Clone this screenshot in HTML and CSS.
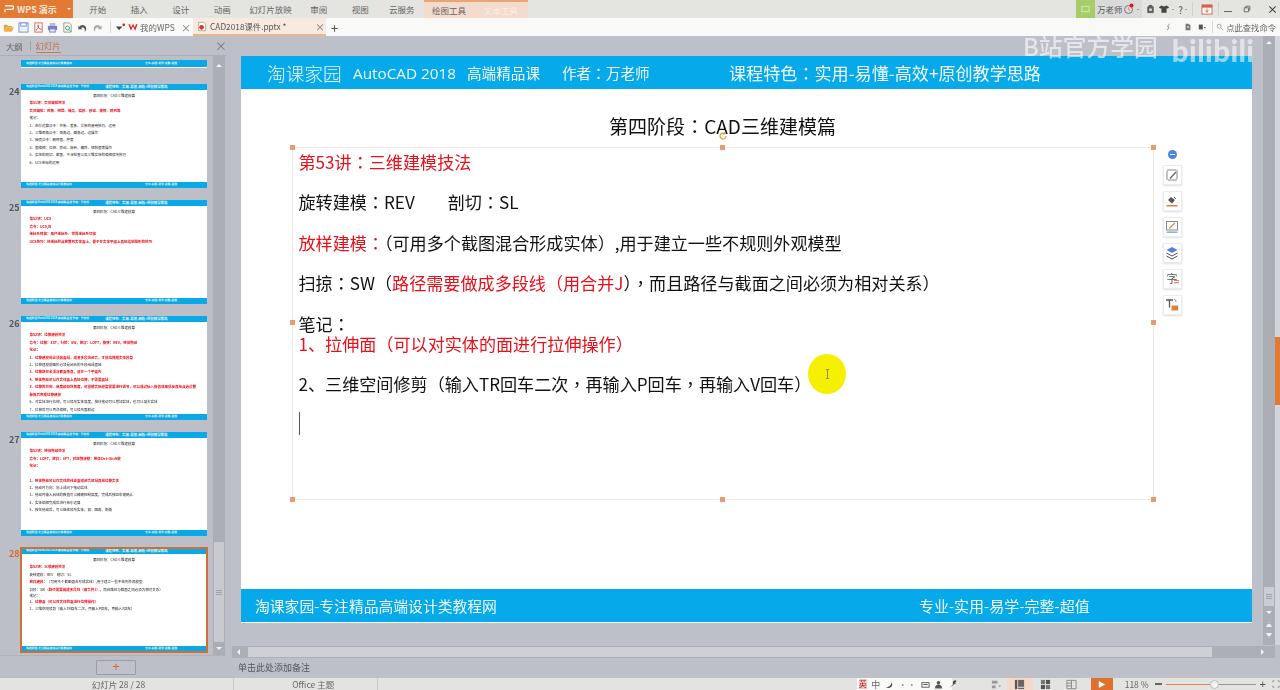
FILE: index.html
```html
<!DOCTYPE html>
<html>
<head>
<meta charset="utf-8">
<title>CAD2018课件.pptx</title>
<link rel="stylesheet" href="styles.css">
</head>
<body>
<div class="app">
  <header class="titlebar">
    <div class="wps-btn"><svg class="wps-logo" viewBox="0 0 12 10"><path d="M1 1h8.500a2 2 0 0 1 0 4.400H3M1 5.400V9" fill="none" stroke="#fff" stroke-width="1.600"/></svg><span>WPS 演示</span><i class="caret"></i></div>
    <nav class="ribbon">
      <span class="rt w42">开始</span><span class="rt w42">插入</span><span class="rt w42">设计</span><span class="rt w42">动画</span><span class="rt w54">幻灯片放映</span><span class="rt w42">审阅</span><span class="rt w42">视图</span><span class="rt w42">云服务</span>
      <div class="ctx"><span class="ctx-a">绘图工具</span><span class="ctx-b">文本工具</span></div>
    </nav>
    <div class="win">
      <div class="green"><svg viewBox="0 0 10 8" class="gi"><rect x="1" y="1" width="8" height="6" fill="none" stroke="#d6efb0"/></svg></div>
      <div class="user"><span>万老师</span><svg viewBox="0 0 12 12" class="ui"><circle cx="5.500" cy="6.500" r="4" fill="none" stroke="#777"/><path d="M5.500 4.500v2l1.600 1" fill="none" stroke="#e08050"/><circle cx="8.500" cy="2.500" r="2" fill="#e01020"/></svg><i class="mini"></i></div>
      <svg viewBox="0 0 10 10" class="wi"><path d="M2 2.500h6V9H2zM3.500 2.500V1h3v1.500" fill="#666" stroke="#555"/><rect x="3.500" y="4.500" width="3" height="2.500" fill="#ddd"/></svg>
      <svg viewBox="0 0 14 10" class="wi wide"><path d="M4 1l3 1 3-1 3 2-1.500 1.500L10 4v5.500H4V4l-1.500.5L1 3z" fill="#444"/></svg><i class="mini"></i>
      <span class="q">?</span><i class="mini"></i>
      <span class="sep"></span>
      <svg viewBox="0 0 12 12" class="wi cal"><rect x=".5" y="1" width="11" height="10" fill="#fff" stroke="#d8604a"/><rect x=".5" y="1" width="11" height="3" fill="#d8604a"/><path d="M6 5v4M4 7l2 2 2-2" fill="none" stroke="#d8604a"/></svg>
      <span class="sep last"></span>
      <span class="ctl min"></span>
      <svg viewBox="0 0 10 10" class="ctl-i"><path d="M1.500 3.500h5.500v5h-5.500zM3.500 3.500V1.500H8.500v5H7" fill="none" stroke="#555"/></svg>
      <svg viewBox="0 0 10 10" class="ctl-i x"><path d="M1.500 1.500l7 7M8.500 1.500l-7 7" stroke="#444" stroke-width="1.200"/></svg>
    </div>
  </header>

  <div class="quickbar">
    <svg class="qi" viewBox="0 0 12 12"><path d="M1 3h3.500l1 1.300H10V6H3.500L1 10.500z" fill="#e5a33a"/><path d="M3.500 6H12l-2.500 4.500H1z" fill="#efb04c"/></svg>
    <svg class="qi" viewBox="0 0 12 12"><rect x="1" y="1" width="10" height="10" fill="#eef3fb" stroke="#6e90d0"/><rect x="3" y="1" width="6" height="3.500" fill="#fff" stroke="#6e90d0"/></svg>
    <svg class="qi" viewBox="0 0 12 12"><rect x="2" y="1" width="8" height="10" fill="#fff" stroke="#c66"/><path d="M3 9c2-1 4-4 2.500-6-1 2 1.500 5 4 5" fill="none" stroke="#c44"/></svg>
    <svg class="qi" viewBox="0 0 12 12"><rect x="3" y="1" width="6" height="3" fill="#b7b9e0"/><rect x="1" y="4" width="10" height="5" rx="1" fill="#7d7fc0"/><rect x="3" y="7.500" width="6" height="3.500" fill="#e8e8f5" stroke="#7d7fc0"/></svg>
    <svg class="qi" viewBox="0 0 12 12"><path d="M2 1h6l2 2v8H2z" fill="#fff" stroke="#8a9a8a"/><circle cx="6" cy="6.500" r="2.200" fill="none" stroke="#4a9a5a"/><path d="M7.600 8l2 2.500" stroke="#4a9a5a"/></svg>
    <svg class="qi" viewBox="0 0 12 12"><path d="M2.500 5.500C4 2.500 9 2.500 10 6.500c.3 1.500-.5 3-1.500 4 .5-3-1-5.500-4-4L6 8H1.500V3.500z" fill="#555"/></svg>
    <svg class="qi" viewBox="0 0 12 12"><path d="M9.500 5.500C8 2.500 3 2.500 2 6.500c-.3 1.500.5 3 1.500 4-.5-3 1-5.500 4-4L6 8h4.500V3.500z" fill="#aaa"/></svg>
    <span class="qsep"></span>
    <svg class="qi drop" viewBox="0 0 12 12"><path d="M1 5h7l-3.500 4z" fill="#444"/><circle cx="9.500" cy="3" r="1.500" fill="#d22"/></svg>
    <div class="doc-tab">
      <svg class="wlogo" viewBox="0 0 12 10"><path d="M.5 1l3 8 2.500-5.500L8.500 9l3-8h-2L8.300 5 6 .5 3.700 5 2.500 1z" fill="#d9232d"/></svg>
      <span class="tab-name">我的WPS</span><span class="tab-x">×</span>
    </div>
    <div class="doc-tab active">
      <svg class="wlogo ppt" viewBox="0 0 12 12"><path d="M2 1h6l2.500 2.500V11H2z" fill="#fff" stroke="#a98"/><circle cx="5.500" cy="7" r="2.800" fill="#c8402a"/></svg>
      <span class="tab-name">CAD2018课件.pptx *</span><span class="tab-x">×</span>
    </div>
    <span class="plus">+</span>
    <div class="quick-right">
      <svg class="qr q1" viewBox="0 0 10 10"><path d="M6 1L3 4l2 1-2 4" fill="none" stroke="#777"/></svg>
      <svg class="qr q2" viewBox="0 0 10 10"><path d="M2 1h4l2 2v6H2z" fill="#777"/><rect x="4" y="4" width="2" height="2" fill="#eee"/></svg>
      <svg class="qr q3" viewBox="0 0 10 10"><path d="M1 2h5v6H1z" fill="#555"/><path d="M7 5h3L8.500 7z" fill="#555"/></svg>
      <span class="qsep small"></span>
      <svg class="qr q4" viewBox="0 0 10 10"><circle cx="4" cy="4" r="2.500" fill="none" stroke="#999"/><path d="M6 6l3 3" stroke="#999"/></svg>
      <span class="find">点此查找命令</span>
    </div>
  </div>

  <main class="main">
    <aside class="side">
      <div class="side-tabs">
        <span class="st">大纲</span><span class="st-sep"></span><span class="st on">幻灯片</span>
        <span class="side-x">×</span>
      </div>
      <div class="side-body">
        <div class="thumbs">
          <div class="thumb-row cut"><div class="thumb-slide tail"><div class="t-foot"><span>淘课家园-专注精品高端设计类教程网</span><span>专业-实用-易学-完整-超值</span></div></div></div>

          <div class="thumb-row"><span class="num">24</span><div class="thumb-slide">
            <div class="t-head"><span>淘课家园 AutoCAD 2018 高端精品课 作者：万老师</span><span>课程特色：实用-易懂-高效+原创教学思路</span></div>
            <div class="t-body"><p class="t-title">第四阶段：CAD三维建模篇</p>
            <p class="r">第51讲：实体编辑技法</p><p class="r">实体编辑：倒角、倒圆、抽壳、偏移、移动、旋转、阵列等</p><p>笔记：</p><p>1、布尔运算命令：并集、差集、交集的使用技巧、运用</p><p>2、三维倒角命令：倒角边、圆角边、边操作</p><p>3、抽壳命令：删除面，厚度</p><p>4、面编辑：拉伸、移动、旋转、偏移、倾斜面等操作</p><p>5、实体的剖切、截面、干涉检查以及三维实体的编辑修改技巧</p><p>6、UCS坐标的运用</p></div>
            <div class="t-foot"><span>淘课家园-专注精品高端设计类教程网</span><span>专业-实用-易学-完整-超值</span></div></div></div>

          <div class="thumb-row"><span class="num">25</span><div class="thumb-slide">
            <div class="t-head"><span>淘课家园 AutoCAD 2018 高端精品课 作者：万老师</span><span>课程特色：实用-易懂-高效+原创教学思路</span></div>
            <div class="t-body"><p class="t-title">第四阶段：CAD三维建模篇</p>
            <p class="r">第52讲：UCS</p><p class="r">命令：UCS,W</p><p class="r">坐标系转换：用户坐标系、世界坐标系切换</p><p class="r">UCS技巧：将坐标原点放置到实体面上，便于在实体平面上直接绘制图形的技巧</p></div>
            <div class="t-foot"><span>淘课家园-专注精品高端设计类教程网</span><span>专业-实用-易学-完整-超值</span></div></div></div>

          <div class="thumb-row"><span class="num">26</span><div class="thumb-slide">
            <div class="t-head"><span>淘课家园 AutoCAD 2018 高端精品课 作者：万老师</span><span>课程特色：实用-易懂-高效+原创教学思路</span></div>
            <div class="t-body"><p class="t-title">第四阶段：CAD三维建模篇</p>
            <p class="r">第52讲：拉伸建模技法</p><p class="r">命令：拉伸：EXT，扫掠：SW，放样：LOFT，旋转：REV，按住拖动</p><p class="r">笔记：</p><p class="r">1、拉伸建模前必须做面域，或者多段线闭合，才能拉伸成实体模型</p><p>2、拉伸建模前图形必须是闭合的多段线或面域</p><p class="r">3、拉伸路径必须与截面垂直，且在一个平面内</p><p class="r">4、按住拖动可以在实体面上直接拉伸，不需要面域</p><p class="r">5、拉伸的方向、高度和倾斜角度，可根据实际模型需要进行调节，可以通过输入数值或用鼠标直接点选设置参数后完成拉伸建模</p><p>6、对实体进行拉伸，可以修改实体高度，按住拖动可以增加实体，也可以减去实体</p><p>7、拉伸后可以再次编辑，可以修改面和边</p></div>
            <div class="t-foot"><span>淘课家园-专注精品高端设计类教程网</span><span>专业-实用-易学-完整-超值</span></div></div></div>

          <div class="thumb-row"><span class="num">27</span><div class="thumb-slide">
            <div class="t-head"><span>淘课家园 AutoCAD 2018 高端精品课 作者：万老师</span><span>课程特色：实用-易懂-高效+原创教学思路</span></div>
            <div class="t-body"><p class="t-title">第四阶段：CAD三维建模篇</p>
            <p class="r">第52讲：按住拖动技法</p><p class="r">命令：LOFT，放样：SFT，对应快捷键：按住Ctrl+Shift键</p><p class="r tall">笔记：</p><p class="r">1、按住拖动可以在实体的任意面或闭合区域直接拉伸实体</p><p>2、拖动时方向：向上或向下拖动实体</p><p>3、拖动时输入具体的数值可以精确控制高度，完成后按回车键确认</p><p>4、实体编辑完成后进行布尔运算</p><p>5、按住拖动后，可以继续修改实体，如：圆角、倒角</p></div>
            <div class="t-foot"><span>淘课家园-专注精品高端设计类教程网</span><span>专业-实用-易学-完整-超值</span></div></div></div>

          <div class="thumb-row cur"><span class="num">28</span><div class="thumb-slide">
            <div class="t-head"><span>淘课家园 AutoCAD 2018 高端精品课 作者：万老师</span><span>课程特色：实用-易懂-高效+原创教学思路</span></div>
            <div class="t-body"><p class="t-title">第四阶段：CAD三维建模篇</p>
            <p class="r">第53讲：三维建模技法</p><p>旋转建模：REV　剖切：SL</p><p><b class="r">放样建模：</b>（可用多个截图混合形成实体）,用于建立一些不规则外观模型</p><p>扫掠：SW（<b class="r">路径需要做成多段线（用合并J）</b>，而且路径与截面之间必须为相对关系）</p><p class="tight">笔记：</p><p class="r">1、拉伸面（可以对实体的面进行拉伸操作）</p><p>2、三维空间修剪（输入TR回车二次，再输入P回车，再输入V回车）</p></div>
            <div class="t-foot"><span>淘课家园-专注精品高端设计类教程网</span><span>专业-实用-易学-完整-超值</span></div></div></div>
        </div>
        <div class="side-scroll">
          <i class="up"></i>
          <div class="s-track"><div class="s-thumb"><b></b><b></b><b></b></div></div>
          <i class="down"></i>
        </div>
      </div>
      <div class="add-row"><button class="add-btn">+</button></div>
    </aside>

    <section class="editor">
      <div class="stage-row">
        <div class="stage">
          <article class="slide">
            <div class="s-head">
              <span class="brand">淘课家园</span><span class="prod">AutoCAD 2018</span><span class="lvl">高端精品课</span><span class="auth">作者<i class="c">：</i>万老师</span><span class="feat">课程特色<i class="c">：</i>实用-易懂-高效+原创教学思路</span>
            </div>
            <div class="s-main">
              <h1 class="s-title">第四阶段<i class="c">：</i>CAD三维建模篇</h1>
              <div class="box">
                <div class="box-text">
                  <p class="red">第53讲<i class="c">：</i>三维建模技法</p>
                  <p>&nbsp;</p>
                  <p>旋转建模<i class="c">：</i>REV<span class="gap"></span>剖切<i class="c">：</i>SL</p>
                  <p>&nbsp;</p>
                  <p><span class="red">放样建模<i class="c">：</i></span><i class="c">（</i>可用多个截图混合形成实体<i class="c">）</i>,用于建立一些不规则外观模型</p>
                  <p>&nbsp;</p>
                  <p>扫掠<i class="c">：</i>SW<i class="c">（</i><span class="red">路径需要做成多段线<i class="c">（</i>用合并J</span><i class="c">）</i><i class="c">，</i>而且路径与截面之间必须为相对关系<i class="c">）</i></p>
                  <p>&nbsp;</p>
                  <p>笔记<i class="c">：</i></p>
                  <p class="red">1、拉伸面<i class="c">（</i>可以对实体的面进行拉伸操作<i class="c">）</i></p>
                  <p>&nbsp;</p>
                  <p>2、三维空间修剪<i class="c">（</i>输入TR回车二次<i class="c">，</i>再输入P回车<i class="c">，</i>再输入V回车<i class="c">）</i></p>
                  <p>&nbsp;</p>
                  <p class="caret-line"><span class="text-caret"></span></p>
                </div>
                <i class="h tl"></i><i class="h tc"></i><i class="h tr"></i><i class="h ml"></i><i class="h mr"></i><i class="h bl"></i><i class="h bc"></i><i class="h br"></i>
                <svg class="rot" viewBox="0 0 10 10"><path d="M8 5a3 3 0 1 1-1-2.200M7 1v2h-2" fill="none" stroke="#e0a030" stroke-width="1.200"/></svg>
                <div class="tools">
                  <span class="t-minus"></span>
                  <span class="tool"><svg viewBox="0 0 14 14"><path d="M2 12V2h10v10z" fill="none" stroke="#888" stroke-dasharray="9 1"/><path d="M5 10.500L11 4" stroke="#666" stroke-width="1.300"/></svg></span>
                  <span class="tool"><svg viewBox="0 0 14 14"><path d="M3 6l3-3 4 3-3 3.500z" fill="#555"/><path d="M9 3l2 2" stroke="#555"/><rect x="1.500" y="11" width="11" height="1.500" fill="#e08040"/></svg></span>
                  <span class="tool"><svg viewBox="0 0 14 14"><rect x="1.500" y="1.500" width="11" height="8.500" fill="none" stroke="#888"/><path d="M4 8.500L10 3" stroke="#e09040" stroke-width="1.200"/><rect x="1.500" y="11.500" width="11" height="1.300" fill="#6fa0d8"/></svg></span>
                  <span class="tool"><svg viewBox="0 0 14 14"><path d="M7 1l5.500 3L7 7 1.500 4z" fill="#5b7fd8"/><path d="M1.500 7L7 10l5.500-3M1.500 10L7 13l5.500-3" fill="none" stroke="#555"/></svg></span>
                  <span class="tool glyph">字<svg class="sw" viewBox="0 0 6 6"><path d="M0 2h6M0 4.500h6" stroke="#d05040"/></svg></span>
                  <span class="tool"><svg viewBox="0 0 14 14"><path d="M1 2h7M4.500 2v7.500" stroke="#555" stroke-width="1.300" fill="none"/><path d="M9 1.500c1.500 0 2 1 2 2.500" fill="none" stroke="#888"/><rect x="6.500" y="7.500" width="6.500" height="5" fill="#e08040"/></svg></span>
                </div>
              </div>
            </div>
            <div class="s-foot"><span>淘课家园-专注精品高端设计类教程网</span><span class="f-r">专业-实用-易学-完整-超值</span></div>
          </article>
        </div>
        <div class="v-scroll">
          <i class="up"></i>
          <div class="v-track"><div class="v-thumb"><b></b><b></b><b></b></div></div>
          <i class="down"></i>
          <i class="dbl"></i>
          <i class="dbl d"></i>
        </div>
        <div class="orange-rail"><span class="rail-tab"></span></div>
      </div>
      <div class="h-scroll"><i class="left"></i><div class="h-track"></div><i class="right"></i></div>
      <div class="notes">单击此处添加备注</div>
    </section>
  </main>

  <footer class="status">
    <span class="sl">幻灯片 28 / 28</span>
    <span class="sl2">Office 主题</span>
    <div class="ime">
      <span class="ime-s">英</span><span class="ime-t">中</span>
      <svg viewBox="0 0 10 10"><path d="M7 1c1 4-2 7-6 7 2 1.500 7 1 7-3z" fill="#444"/></svg>
      <span class="ime-t light">··</span>
      <svg viewBox="0 0 10 10"><rect x="1" y="3" width="8" height="5" fill="none" stroke="#555"/><path d="M2.500 5h5" stroke="#555"/></svg>
      <svg viewBox="0 0 10 10"><circle cx="5" cy="3" r="2" fill="#555"/><path d="M1 9.500c0-6 8-6 8 0z" fill="#555"/></svg>
      <svg viewBox="0 0 10 10"><path d="M1.500 9L6 4.500A2.500 2.500 0 0 1 9.500 1L8 3l.5 1L6.500 5z" fill="#444"/></svg>
    </div>
    <div class="views">
      <span class="v v0"><svg viewBox="0 0 12 12"><path d="M1 2h6v3H1zM1 7h4v3H1z" fill="#999"/><path d="M8 7h3L9.500 9z" fill="#999"/></svg></span>
      <span class="v v1"><svg viewBox="0 0 12 12"><rect x="1" y="1" width="2.500" height="10" fill="#555"/><rect x="4.500" y="1" width="6.500" height="10" fill="#666"/><path d="M4.500 9h6.500" stroke="#eee"/></svg></span>
      <span class="v"><svg viewBox="0 0 12 12"><rect x="1" y="1" width="4.500" height="4.500" fill="#777"/><rect x="6.500" y="1" width="4.500" height="4.500" fill="#555"/><rect x="1" y="6.500" width="4.500" height="4.500" fill="#555"/><rect x="6.500" y="6.500" width="4.500" height="4.500" fill="#777"/></svg></span>
      <span class="v"><svg viewBox="0 0 12 12"><path d="M1 1.500h10v9H1zM6 1.500v9M1 4.500h5M1 7.500h5" fill="none" stroke="#888"/></svg></span>
      <span class="play"><svg viewBox="0 0 10 10"><path d="M2 1l7 4-7 4z" fill="#fff"/></svg></span>
    </div>
    <span class="zoom">118 %</span>
    <span class="z-minus"></span>
    <div class="slider"><span class="knob"></span></div>
    <span class="z-plus">+</span>
    <svg class="fit" viewBox="0 0 10 10"><path d="M1 3V1h2M7 1h2v2M9 7v2H7M3 9H1V7" fill="none" stroke="#888"/></svg>
  </footer>

  <div class="watermark"><span class="wm-a">B站官方学园</span><span class="wm-b">bilibili</span></div>
  <div class="cursor"><svg viewBox="0 0 6 12" class="ibeam"><path d="M1 .5h4M3 .5v11M1 11.500h4" stroke="#777" fill="none"/></svg></div>
</div>
</body>
</html>
```

FILE: styles.css
```css
* { box-sizing: border-box; }
html, body { margin: 0; padding: 0; }
body { width: 1280px; height: 690px; overflow: hidden; font-family: "Noto Sans CJK SC", "Open Sans", sans-serif; color: #333; background: #bdbfc8; }
p, h1 { margin: 0; font-weight: 400; }
i, b { font-style: normal; font-weight: 400; }
.app { position: relative; width: 1280px; height: 690px; display: flex; flex-direction: column; filter: blur(.3px); }

/* title bar */
.titlebar { height: 18px; display: flex; background: #e4e4e1; flex: none; }
.wps-btn { width: 73px; flex: none; background: #e27a34; color: #f6e6da; display: flex; align-items: center; font-size: 9px; font-weight: 700; padding-left: 4px; gap: 3px; white-space: nowrap; }
.wps-logo { width: 10px; height: 8px; }
.caret { width: 0; height: 0; margin-left: 7px; border: 2.500px solid transparent; border-top-color: #fff; border-bottom: 0; }
.ribbon { flex: none; display: flex; align-items: center; font-size: 8.500px; color: #666; height: 18px; padding-left: 4px; width: 457px; }
.rt { text-align: center; white-space: nowrap; flex: none; }
.w42 { width: 41.500px; }
.w54 { width: 55px; }
.ctx { display: flex; margin-left: 1.500px; height: 18px; background: #f3dccc; border-top: 2px solid #e8a678; align-items: center; font-size: 8.500px; width: 104px; flex: none; }
.ctx-a { width: 50px; text-align: center; color: #666; white-space: nowrap; }
.ctx-b { width: 54px; text-align: center; color: #fbefe8; white-space: nowrap; }
.win { margin-left: auto; display: flex; align-items: center; height: 18px; padding-right: 3px; flex: none; }
.green { width: 19px; height: 18px; background: #a7cc6a; display: flex; align-items: center; justify-content: center; flex: none; }
.gi { width: 9px; height: 8px; }
.user { display: flex; align-items: center; font-size: 8.400px; color: #555; background: #dadada; height: 18px; padding: 0 0 0 2px; width: 47px; white-space: nowrap; flex: none; }
.ui { width: 12px; height: 12px; flex: none; margin-left: 1px; }
.mini { flex: none; width: 0; height: 0; border: 1.500px solid transparent; border-top-color: #666; border-bottom: 0; margin: 0 3px 0 2px; }
.wi { width: 9px; height: 10px; margin-left: 4px; flex: none; }
.wide { width: 12px; margin-left: 3px; }
.q { font-size: 10px; color: #555; margin-left: 1px; }
.sep { width: 1px; height: 14px; background: #d0d0d0; margin: 0 8px 0 2px; flex: none; }
.cal { width: 12px; height: 11px; margin: 0 5px 0 0; }
.sep.last { margin: 0 5px 0 0; }
.ctl.min { width: 8px; height: 1px; background: #666; margin: 4px 11px 0 0; flex: none; }
.ctl-i { width: 8px; height: 8px; flex: none; }
.x { width: 9px; height: 9px; margin-left: 17px; }

/* quick bar */
.quickbar { height: 18px; display: flex; align-items: center; background: #f9faf8; flex: none; padding-left: 3px; }
.qi { width: 11px; height: 11px; margin-right: 3.800px; flex: none; }
.qsep { width: 1px; height: 12px; background: #d8d8d8; margin: 0 4px 0 3px; flex: none; }
.drop { margin-right: 2.500px; }
.doc-tab { height: 18px; display: flex; align-items: center; font-size: 8.500px; color: #666; width: 61px; flex: none; position: relative; }
.wlogo { width: 10px; height: 9px; margin-right: 2px; flex: none; }
.tab-name { white-space: nowrap; }
.tab-x { position: absolute; right: -2px; font-size: 10px; color: #777; }
.doc-tab.active { background: #f8eadf; border-bottom: 2px solid #e9b58e; width: 133px; margin-left: 4px; padding-left: 4px; color: #555; font-size: 8.300px; }
.active .tab-x { right: 1px; }
.ppt { height: 11px; width: 10px; margin-right: 3px; }
.plus { font-size: 13px; margin-left: 5px; color: #555; line-height: 1; }
.quick-right { margin-left: auto; display: flex; align-items: center; padding-right: 4px; }
.qr { width: 8px; height: 8px; flex: none; }
.q1 { margin-right: 11px; }
.q2 { margin-right: 6px; }
.q3 { margin-right: 6px; }
.qsep.small { margin: 0 3px 0 0; }
.q4 { margin-right: 2px; }
.find { font-size: 8.300px; color: #666; white-space: nowrap; }

/* main */
.main { flex: 1; display: flex; min-height: 0; }
.side { width: 232px; flex: none; display: flex; flex-direction: column; background: #bcbec8; }
.side-tabs { height: 20px; flex: none; display: flex; align-items: center; padding-left: 6px; font-size: 8.300px; color: #666; position: relative; border-bottom: 1px solid #adaeb6; margin-right: 6px; background: #bdbfc9; }
.st { white-space: nowrap; }
.st.on { color: #c4693f; border-bottom: 1px solid #cc7a50; margin-left: 5px; line-height: 14px; }
.st-sep { width: 1px; height: 10px; background: #a3a4ad; margin-left: 7px; }
.side-x { position: absolute; right: -1px; top: 3px; font-size: 12px; color: #777; line-height: 14px; }
.side-body { flex: 1; display: flex; min-height: 0; margin-right: 6px; padding-top: 3px; border-bottom: 1px solid #b0b1ba; }
.thumbs { width: 213px; flex: none; display: flex; flex-direction: column; gap: 12px; overflow: hidden; padding-top: 1px; }
.thumb-row { position: relative; height: 104px; flex: none; padding-left: 21px; }
.thumb-row.cut { height: 8px; overflow: hidden; margin-bottom: 4px; }
.thumb-row.cut .thumb-slide { height: 8px; }
.num { position: absolute; left: 9px; top: 2px; font-size: 9px; color: #555; font-weight: 700; line-height: 12px; }
.cur .num { color: #d46a2a; top: 0; }
.thumb-slide { width: 186px; height: 104px; background: #fff; display: flex; flex-direction: column; overflow: hidden; font-size: 3.500px; line-height: 7.430px; color: #222; }
.cur .thumb-slide { outline: 2px solid #cf6f30; outline-offset: -1px; }
.t-head, .t-foot { height: 5.800px; flex: none; background: #08a9e6; color: #e8f6fc; display: flex; align-items: center; font-size: 2.800px; font-weight: 700; line-height: 5px; padding-left: 5px; white-space: nowrap; }
.t-head span:last-child { margin-left: 16px; font-size: 3.400px; }
.t-foot { height: 6.500px; justify-content: space-between; padding-right: 30px; }
.t-body { flex: 1; padding: 0 8.500px; font-weight: 700; overflow: hidden; }
.t-title { text-align: center; margin-top: 2px; }
.t-body .r, .t-body b.r { color: #e8101a; font-weight: 700; }
.t-body .tall { margin-bottom: 7px; }
.t-body .tight { margin-bottom: 0; line-height: 5px; }
.side-scroll { width: 12px; flex: none; display: flex; flex-direction: column; background: #acaeb6; margin-top: -3px; padding-top: 3px; }
.side-scroll .up, .side-scroll .down, .v-scroll .up, .v-scroll .down { flex: none; width: 0; height: 0; align-self: center; border: 3.500px solid transparent; }
.up { border-bottom-color: #f2f2f5 !important; border-top: 0 !important; margin: 5px 0; }
.down { border-top-color: #f2f2f5 !important; border-bottom: 0 !important; margin: 5px 0; }
.s-track { flex: 1; display: flex; flex-direction: column; justify-content: flex-end; }
.s-thumb { height: 100px; background: #c8cad0; margin: 0 1px; display: flex; flex-direction: column; justify-content: center; align-items: center; gap: 1px; }
.s-thumb b, .v-thumb b { display: block; width: 6px; height: 1px; background: #a0a2aa; }
.add-row { height: 22px; flex: none; display: flex; justify-content: center; align-items: center; }
.add-btn { width: 40px; height: 15px; padding: 0; background: #c0c1ca; border: 1px solid #9c9da4; border-radius: 1px; color: #cd6a3a; font-size: 13px; line-height: 12px; font-family: "Liberation Sans", sans-serif; }

/* editor */
.editor { flex: 1; display: flex; flex-direction: column; min-width: 0; background: #bec0c9; }
.stage-row { height: 609px; display: flex; flex: none; }
.stage { width: 1031px; flex: none; padding: 20px 0 0 9px; }
.slide { width: 1011px; height: 567px; background: #fff; display: flex; flex-direction: column; }
.s-head { height: 33px; flex: none; background: #06a9ea; color: #eef9fe; display: flex; align-items: center; padding-left: 26px; white-space: nowrap; }
.brand { font-size: 18.700px; font-weight: 300; width: 86px; }
.prod { font-family: "Open Sans", sans-serif; font-size: 15.300px; width: 114px; }
.lvl { width: 95px; font-size: 14.600px; }
.auth { font-size: 14.600px; width: 167px; }
.feat { font-size: 17.100px; }
.c { font-family: "Noto Sans CJK TC", sans-serif; }
.s-main { flex: 1; position: relative; min-height: 0; }
.s-title { position: relative; font-size: 19px; text-align: center; color: #111; line-height: 24px; padding-top: 25px; height: 58px; width: 963px; }
.box { position: relative; margin: 0 0 0 51px; width: 862px; height: 353px; border: 1px solid #f1e8e2; }
.box-text { padding: 4px 0 0 5.500px; font-size: 17.100px; line-height: 20.200px; color: #111; white-space: nowrap; }
.box-text p { height: 20.200px; }
.box-text .red, .red { color: #e8101a; }
.gap { display: inline-block; width: 33px; }
.caret-line { display: flex; }
.text-caret { width: 1px; height: 23px; background: #555; margin-top: -2px; }
.h { position: absolute; width: 5px; height: 5px; background: #e89a70; }
.tl { left: -3px; top: -3px; } .tc { left: 427px; top: -3px; } .tr { right: -3px; top: -3px; }
.ml { left: -3px; top: 171.500px; } .mr { right: -3px; top: 171.500px; }
.bl { left: -3px; bottom: -3px; } .bc { left: 427px; bottom: -3px; } .br { right: -3px; bottom: -3px; }
.rot { position: absolute; left: 424.500px; top: -17px; width: 10px; height: 10px; }
.tools { position: absolute; left: 869px; top: 2px; width: 20px; display: flex; flex-direction: column; align-items: center; gap: 6.500px; }
.t-minus { width: 9px; height: 9px; border-radius: 50%; background: #4c86dc; margin-bottom: -.5px; display: flex; align-items: center; justify-content: center; }
.t-minus::after { content: ""; width: 5px; height: 1.500px; background: #fff; }
.tool { width: 19px; height: 19.500px; background: #fff; border: 1px solid #ececec; box-shadow: 0 1px 2px #ddd; display: flex; align-items: center; justify-content: center; position: relative; }
.tool svg { width: 14px; height: 14px; }
.glyph { font-size: 11px; color: #555; line-height: 1; }
.tool .sw { position: absolute; right: 2px; bottom: 4px; width: 5px; height: 5px; }
.s-foot { height: 33px; flex: none; background: #06a9ea; color: #eef9fe; display: flex; align-items: center; font-size: 14.800px; padding-left: 14px; margin-bottom: 1px; white-space: nowrap; }
.f-r { margin-left: 422px; font-size: 15px; }

.v-scroll { width: 12px; flex: none; display: flex; flex-direction: column; background: #acaeb6; align-items: center; }
.v-track { flex: 1; width: 100%; display: flex; flex-direction: column; justify-content: flex-end; }
.v-thumb { height: 19px; background: #cbcdd3; margin: 0 1px; display: flex; flex-direction: column; justify-content: center; align-items: center; gap: 1px; }
.dbl { width: 6px; height: 5px; margin: 3px 0; flex: none; border-top: 1px solid #f0f0f3; background: linear-gradient(to bottom, transparent 1px, #f0f0f3 1px, #f0f0f3 4px); clip-path: polygon(50% 0, 100% 100%, 0 100%); }
.dbl.d { transform: rotate(180deg); margin-bottom: 7px; }
.orange-rail { flex: 1; background: #d3d5dc; position: relative; }
.rail-tab { position: absolute; left: 0; right: 0; top: 301px; height: 68px; background: #e27a34; }
.h-scroll { height: 12px; flex: none; display: flex; align-items: center; background: #adafb7; margin-right: 5px; margin-top: 1px; }
.left { flex: none; width: 0; height: 0; margin: 0 5px; border: 3.500px solid transparent; border-right-color: #f2f2f5; border-left: 0; }
.h-track { width: 964px; height: 10px; background: #ced0d5; margin-left: 3px; }
.right { margin-left: auto; margin-right: 11px; width: 0; height: 0; border: 3.500px solid transparent; border-left-color: #f2f2f5; border-right: 0; }
.notes { flex: 1; padding: 3px 0 0 6px; font-size: 9px; line-height: 14px; color: #555; }

/* status */
.status { height: 12px; flex: none; background: #e3e3e2; display: flex; align-items: center; font-size: 8.500px; color: #666; overflow: hidden; }
.sl { width: 234px; text-align: center; border-right: 1px solid #c8c8c8; padding-left: 4px; }
.sl2 { width: 144px; text-align: center; border-right: 1px solid #c8c8c8; padding-left: 16px; }
.ime { margin-left: 479px; width: 95px; height: 12px; background: #f9f9f7; display: flex; align-items: center; padding-left: 2px; gap: 4.500px; font-size: 9px; }
.ime svg { width: 9px; height: 9px; flex: none; }
.ime-s { width: 10px; height: 10px; background: #f2cabb; color: #b24; font-size: 8px; line-height: 10px; text-align: center; }
.ime-t.light { color: #999; }
.views { margin-left: 37px; display: flex; align-items: center; height: 12px; }
.v { width: 26px; height: 12px; display: flex; align-items: center; justify-content: center; }
.v svg { width: 11px; height: 11px; }
.v0 { width: 16px; margin-right: 2px; }
.v1 { background: #f6d8c8; }
.play { width: 22px; height: 12px; background: #e0702d; margin-left: 6px; display: flex; align-items: center; justify-content: center; }
.play svg { width: 9px; height: 9px; }
.zoom { margin-left: 12px; width: 28px; font-size: 8.500px; white-space: nowrap; }
.z-minus { width: 7px; height: 1.500px; background: #666; margin: 0 2px 0 2px; }
.slider { width: 90px; height: 1px; background: linear-gradient(to right, #e8854a 0 47px, #999 47px); position: relative; margin-left: 2px; }
.knob { position: absolute; left: 44px; top: -4px; width: 9px; height: 9px; border-radius: 50%; background: #f3f3f3; border: 1px solid #bbb; }
.z-plus { margin-left: 4px; font-size: 11px; line-height: 12px; font-family: "Liberation Sans", sans-serif; color: #555; }
.fit { width: 8px; height: 8px; margin-left: 6px; }

/* overlays */
.watermark { position: absolute; left: 1023px; top: 31px; display: flex; align-items: center; color: rgba(255,255,255,.6); pointer-events: none; white-space: nowrap; }
.wm-a { font-size: 23.800px; font-weight: 500; line-height: 30px; }
.wm-b { font-family: "Lato", sans-serif; font-size: 29.500px; font-weight: 900; line-height: 30px; margin-left: 14px; letter-spacing: .4px; color: rgba(255,255,255,.55); position: relative; top: 5px; }
.cursor { position: absolute; left: 808px; top: 354px; width: 38px; height: 40px; border-radius: 50%; background: #f4f000; display: flex; align-items: center; justify-content: center; }
.ibeam { width: 5px; height: 10px; }
```
